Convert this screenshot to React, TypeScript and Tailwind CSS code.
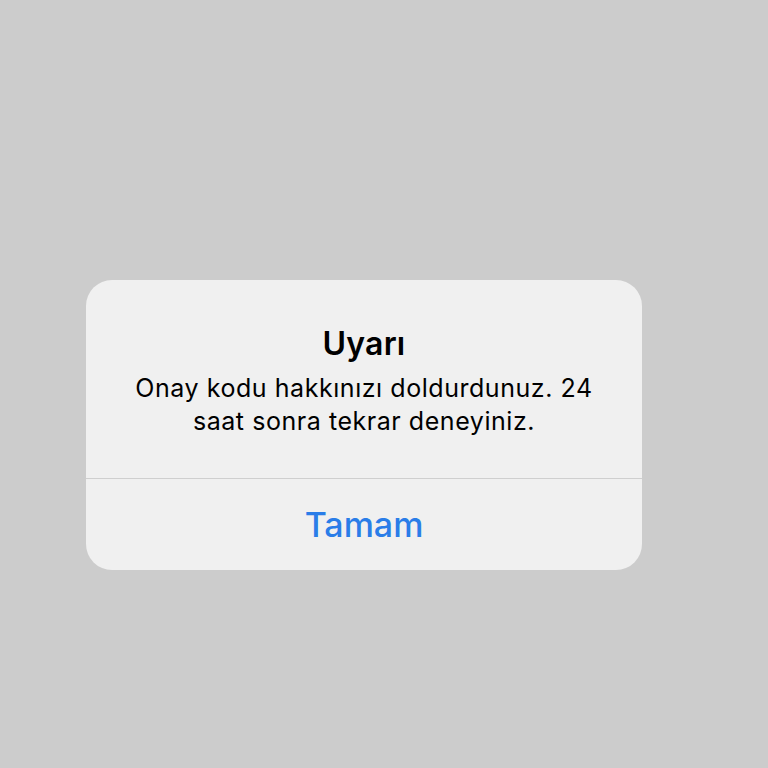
export default function App() {
  return (
    <div
      className="h-[768px] w-[768px] overflow-hidden bg-[#cccccc] pt-[280px] pl-[86px]"
      style={{ fontFamily: "Inter, 'Noto Sans', sans-serif" }}
    >
      <div className="flex w-[556px] flex-col overflow-hidden rounded-[26px] bg-[#f0f0f0]">
        <div className="flex h-[198px] flex-col items-center px-4 pt-[43px] text-center text-black">
          <h2 className="text-[32px] font-semibold leading-[42px] tracking-[0.2px]">Uyarı</h2>
          <p className="mt-[7px] text-[25px] leading-[33px] tracking-[0.55px]">
            Onay kodu hakkınızı doldurdunuz. 24
            <br />
            saat sonra tekrar deneyiniz.
          </p>
        </div>
        <div className="h-px bg-[#cfcfcf]" />
        <button className="flex h-[91px] items-center justify-center text-[34px] font-medium text-[#2a7de8]">
          Tamam
        </button>
      </div>
    </div>
  );
}
